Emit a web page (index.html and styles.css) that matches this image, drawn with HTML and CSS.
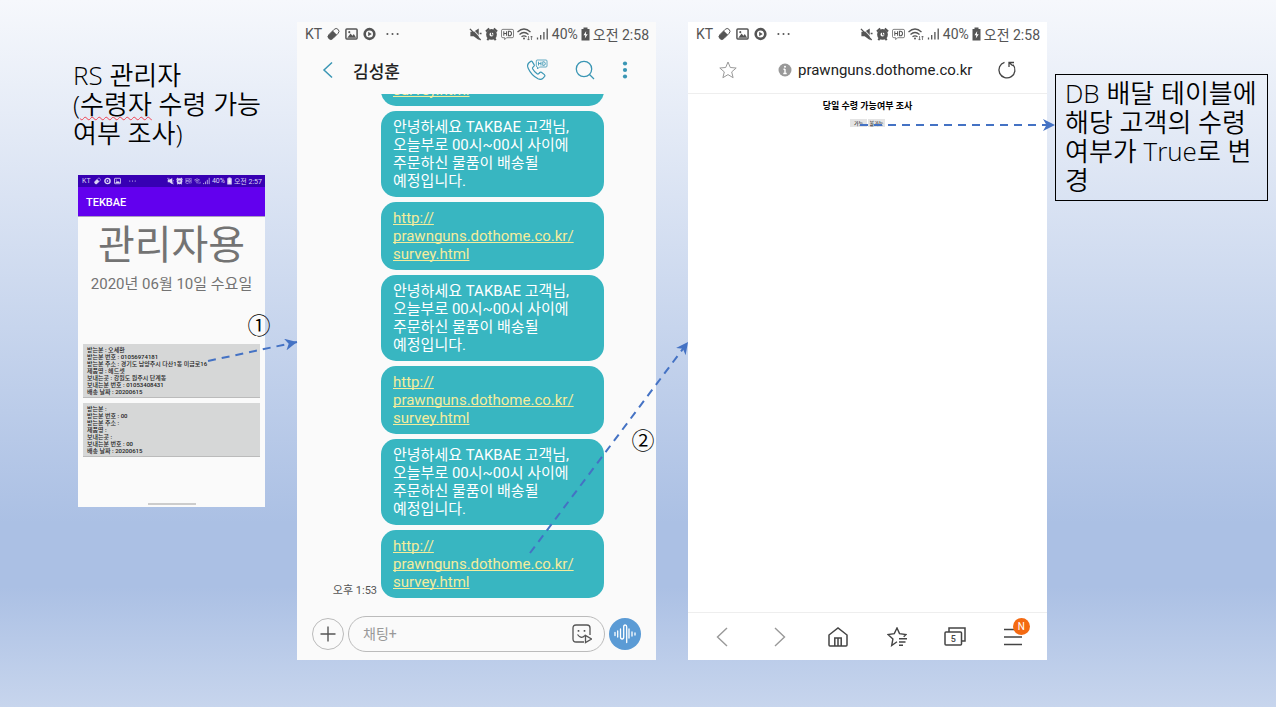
FILE: index.html
```
<!DOCTYPE html>
<html lang="ko">
<head>
<meta charset="utf-8">
<meta name="viewport" content="width=device-width, initial-scale=1">
<title>RS 관리자 수령 조사</title>
<link rel="stylesheet" href="styles.css">
</head>
<body>
<svg class="defs" aria-hidden="true">
  <symbol id="pill" viewBox="0 0 14 14"><g transform="rotate(-45 7 7)"><rect x="0" y="4" width="14" height="6" rx="3" fill="none" stroke="currentColor"/><path d="M3 4h6v6H3a3 3 0 0 1 0-6z" fill="currentColor"/></g></symbol>
  <symbol id="image" viewBox="0 0 14 14"><rect x="1" y="1.600" width="12" height="10.800" rx="1" fill="none" stroke="currentColor" stroke-width="1.600"/><path d="M2.500 11l3.500-4.500 2 2.300L9.500 7l2.500 4z" fill="currentColor"/><circle cx="4.600" cy="5" r="1.100" fill="currentColor"/></symbol>
  <symbol id="disc" viewBox="0 0 14 14"><circle cx="7" cy="7" r="5.200" fill="none" stroke="currentColor" stroke-width="2.800"/><path d="M5.600 4.600v4.800L9.400 7z" fill="currentColor"/></symbol>
  <symbol id="more" viewBox="0 0 14 14"><circle cx="1.500" cy="7" r="1.100" fill="currentColor"/><circle cx="7" cy="7" r="1.100" fill="currentColor"/><circle cx="12.500" cy="7" r="1.100" fill="currentColor"/></symbol>
  <symbol id="mute" viewBox="0 0 14 14"><path d="M1.500 4.500H5L10.500 1v12.500L5 9.500H1.500z" fill="currentColor"/><path d="M2.500.5l11 11.500" stroke="#fff" stroke-opacity=".8" stroke-width="1.200"/><path d="M1 1.500l11.500 12M11.500 6.500h2" stroke="currentColor" stroke-width="1.500"/></symbol>
  <symbol id="alarm" viewBox="0 0 14 14"><circle cx="7" cy="7.500" r="4" fill="none" stroke="currentColor" stroke-width="3.600"/><path d="M1 4.200L4.500 1M13 4.200L9.500 1M2.500 13.500l1.500-2M11.500 13.500l-1.500-2" stroke="currentColor" stroke-width="2.200"/><path d="M7 5v3h2.500" fill="none" stroke="currentColor"/></symbol>
  <symbol id="hd" viewBox="0 0 14 14"><path d="M2 2h10q1.500 0 1.500 1.500v6q0 1.500-1.500 1.500H6l-2 2v-2H2Q.5 11 .5 9.500v-6Q.5 2 2 2z" fill="none" stroke="currentColor" stroke-width=".8"/><path d="M3 4v5M6 4v5M3 6.500h3M8 4v5h1q2.300 0 2.300-2.500T9 4z" fill="none" stroke="currentColor" stroke-width="1.100"/></symbol>
  <symbol id="wifi" viewBox="0 0 16 14"><path d="M.5 5Q7 -1 13.500 5M2.500 7.500Q7 3.500 11.500 7.500M4.500 9.800Q7 8 9.500 9.800" fill="none" stroke="currentColor" stroke-width="1.300"/><circle cx="7" cy="11.500" r="1" fill="currentColor"/><path d="M11.500 9v4M10.300 11.800l1.200 1.300 1.200-1.300M14.500 13V9M13.300 10.300L14.500 9l1.200 1.300" fill="none" stroke="currentColor" stroke-width=".7"/></symbol>
  <symbol id="signal" viewBox="0 0 12 14"><path d="M1 12.500v-2M4.200 12.500V8M7.400 12.500V5M10.700 12.500V1.500" stroke="currentColor" stroke-width="1.300"/></symbol>
  <symbol id="battery" viewBox="0 0 9 14"><path d="M2.500.5h4v1.500h2V13.500H.5V2h2z" fill="currentColor"/><path d="M5.200 4L2.500 8.200h1.800L3.800 11.500l2.900-4.300H4.900z" fill="#fff"/></symbol>
</svg>

<main class="slide">
  <section class="admin">
    <h1 class="caption">RS 관리자<br>(<span class="misspelt">수령자</span> 수령 가능<br>여부 조사)</h1>
    <div class="phone phone-admin">
      <div class="status status-mini">
        <span>KT</span>
        <svg class="ic"><use href="#pill"/></svg><svg class="ic"><use href="#disc"/></svg><svg class="ic"><use href="#image"/></svg><svg class="ic more"><use href="#more"/></svg>
        <span class="status-right"><svg class="ic"><use href="#mute"/></svg><svg class="ic"><use href="#alarm"/></svg><svg class="ic"><use href="#hd"/></svg><svg class="ic wide"><use href="#wifi"/></svg><svg class="ic"><use href="#signal"/></svg><span>40%</span><svg class="ic thin"><use href="#battery"/></svg><span>오전 2:57</span></span>
      </div>
      <div class="appbar">TEKBAE</div>
      <div class="admin-title">관리자용</div>
      <div class="admin-date">2020년 06월 10일 수요일</div>
      <div class="cards">
        <button class="card" type="button">받는분 : 오세환<br>받는분 번호 : 01056974181<br>받는분 주소 : 경기도 남양주시 다산1동 미금로16<br>제품명 : 헤드셋<br>보내는곳 : 강원도 원주시 단계동<br>보내는분 번호 : 01053408431<br>배송 날짜 : 20200615</button>
        <button class="card" type="button">받는분 :<br>받는분 번호 : 00<br>받는분 주소 :<br>제품명 :<br>보내는곳 :<br>보내는분 번호 : 00<br>배송 날짜 : 20200615</button>
      </div>
      <div class="homebar"></div>
    </div>
  </section>

  <section class="phone phone-chat">
    <div class="status">
      <span>KT</span>
      <svg class="ic"><use href="#pill"/></svg><svg class="ic"><use href="#image"/></svg><svg class="ic"><use href="#disc"/></svg><svg class="ic more"><use href="#more"/></svg>
      <span class="status-right"><svg class="ic"><use href="#mute"/></svg><svg class="ic"><use href="#alarm"/></svg><svg class="ic"><use href="#hd"/></svg><svg class="ic wide"><use href="#wifi"/></svg><svg class="ic"><use href="#signal"/></svg><span>40%</span><svg class="ic thin"><use href="#battery"/></svg><span>오전 2:58</span></span>
    </div>
    <header class="chat-head">
      <button class="icon-btn" type="button" aria-label="뒤로"><svg width="12" height="18" viewBox="0 0 12 18"><path d="M10 1.500L2 9l8 7.500" fill="none" stroke="currentColor" stroke-width="1.500"/></svg></button>
      <h2 class="chat-name">김성훈</h2>
      <button class="icon-btn" type="button" aria-label="전화"><svg width="22" height="22" viewBox="0 0 22 22" fill="none" stroke="currentColor"><path d="M4.500 2.500L2.500 4.200Q.8 6.500 2.300 9.500q3.200 7 9.700 10.300 3 1.200 5-.6l1.700-1.900q.6-.9-.3-1.700l-3-2.300q-.9-.5-1.600.2l-1.200 1.300q-.7.500-1.500-.1-2.900-2.100-4.500-5-.4-.8.200-1.400l1.200-1.200q.6-.7.100-1.500L6.200 2.700q-.7-1-1.700-.2z" stroke-width="1.200"/><path d="M11 1h9q1 0 1 1v5q0 1-1 1h-6.500L11.500 10V8Q10.300 8 10.300 7V2q0-1 .7-1z" stroke-width=".8"/><path d="M12.500 2.700v3.800M15 2.700v3.800M12.500 4.600H15M16.800 2.700v3.800h.6q1.900 0 1.900-1.900t-1.900-1.900z" stroke-width=".9"/></svg></button>
      <button class="icon-btn" type="button" aria-label="검색"><svg width="20" height="20" viewBox="0 0 20 20" fill="none" stroke="currentColor" stroke-width="1.300"><circle cx="9" cy="9" r="7.700"/><path d="M14.500 14.500l4.500 4.500"/></svg></button>
      <button class="icon-btn" type="button" aria-label="더보기"><svg width="6" height="18" viewBox="0 0 6 18" fill="currentColor"><circle cx="3" cy="2.500" r="2.100"/><circle cx="3" cy="9" r="2.100"/><circle cx="3" cy="15.500" r="2.100"/></svg></button>
    </header>
    <div class="messages">
      <p class="bubble"><a class="link" href="#survey">http://<br>prawnguns.dothome.co.kr/<br>survey.html</a></p>
      <p class="bubble">안녕하세요 TAKBAE 고객님,<br>오늘부로 00시~00시 사이에<br>주문하신 물품이 배송될<br>예정입니다.</p>
      <p class="bubble"><a class="link" href="#survey">http://<br>prawnguns.dothome.co.kr/<br>survey.html</a></p>
      <p class="bubble">안녕하세요 TAKBAE 고객님,<br>오늘부로 00시~00시 사이에<br>주문하신 물품이 배송될<br>예정입니다.</p>
      <p class="bubble"><a class="link" href="#survey">http://<br>prawnguns.dothome.co.kr/<br>survey.html</a></p>
      <p class="bubble">안녕하세요 TAKBAE 고객님,<br>오늘부로 00시~00시 사이에<br>주문하신 물품이 배송될<br>예정입니다.</p>
      <div class="last-row"><time class="sent">오후 1:53</time><p class="bubble"><a class="link" href="#survey">http://<br>prawnguns.dothome.co.kr/<br>survey.html</a></p></div>
    </div>
    <form class="composer">
      <button class="round" type="button" aria-label="추가"><svg width="16" height="16" viewBox="0 0 16 16"><path d="M8 .5v15M.5 8h15" stroke="currentColor" stroke-width="1.400"/></svg></button>
      <div class="field">
        <input class="field-input" type="text" placeholder="채팅+" aria-label="메시지">
        <button class="icon-btn sticker" type="button" aria-label="스티커"><svg width="20" height="20" viewBox="0 0 20 20" fill="none" stroke="currentColor" stroke-width="1.300"><path d="M12 18H4q-3 0-3-3V4q0-3 3-3h11q3 0 3 3v7"/><path d="M13.500 11.500v7l6-3.500z" fill="#fafafa"/><path d="M5.500 10.500q3.500 5 7.500 1"/><path d="M6.500 6v1.800M12.500 6v1.800" stroke-width="1.600"/></svg></button>
      </div>
      <button class="round voice" type="button" aria-label="음성"><svg width="22" height="20" viewBox="0 0 22 20" fill="none" stroke="currentColor" stroke-width="1.300" stroke-linecap="round"><path d="M1 8.500v3M3.700 7v6M6.500 5v8q0 2 1.600 2t1.600-2V3q0-2 1.500-2t1.500 2v15.500M15 5v9M18 8v4M21 9v2"/></svg></button>
    </form>
  </section>

  <section class="phone phone-web">
    <div class="status">
      <span>KT</span>
      <svg class="ic"><use href="#pill"/></svg><svg class="ic"><use href="#image"/></svg><svg class="ic"><use href="#disc"/></svg><svg class="ic more"><use href="#more"/></svg>
      <span class="status-right"><svg class="ic"><use href="#mute"/></svg><svg class="ic"><use href="#alarm"/></svg><svg class="ic"><use href="#hd"/></svg><svg class="ic wide"><use href="#wifi"/></svg><svg class="ic"><use href="#signal"/></svg><span>40%</span><svg class="ic thin"><use href="#battery"/></svg><span>오전 2:58</span></span>
    </div>
    <header class="web-head">
      <button class="icon-btn grey" type="button" aria-label="즐겨찾기"><svg width="18" height="18" viewBox="0 0 18 18"><path d="M9 1l2.300 5.500 5.900.5-4.500 3.900 1.400 5.800L9 13.600l-5.100 3.100 1.400-5.800L.8 7l5.900-.5z" fill="none" stroke="currentColor"/></svg></button>
      <div class="address">
        <svg width="14" height="14" viewBox="0 0 14 14"><circle cx="7" cy="7" r="6.500" fill="#999"/><path d="M7 6v4.500M5.500 6.300H7M5.300 10.500h3.400" stroke="#fff" stroke-width="1.400"/><circle cx="7" cy="3.700" r="1" fill="#fff"/></svg>
        <input class="url" type="text" value="prawnguns.dothome.co.kr" aria-label="주소">
      </div>
      <button class="icon-btn dark" type="button" aria-label="새로고침"><svg width="20" height="20" viewBox="0 0 20 20" fill="none" stroke="currentColor" stroke-width="1.300"><path d="M7.500 2.300A8 8 0 1 0 16 4.700"/><path d="M12 7V2.500h5M12.300 2.800l3.500 3"/></svg></button>
    </header>
    <div class="web-page">
      <h2 class="survey-title">당일 수령 가능여부 조사</h2>
      <div class="survey-actions"><button class="tiny" type="button">가능</button><button class="tiny" type="button">불가능</button></div>
    </div>
    <nav class="web-nav">
      <button class="icon-btn pale" type="button" aria-label="이전"><svg width="12" height="20" viewBox="0 0 12 20"><path d="M11 1L1.500 10 11 19" fill="none" stroke="currentColor" stroke-width="1.400"/></svg></button>
      <button class="icon-btn pale" type="button" aria-label="다음"><svg width="12" height="20" viewBox="0 0 12 20"><path d="M1 1l9.500 9L1 19" fill="none" stroke="currentColor" stroke-width="1.400"/></svg></button>
      <button class="icon-btn dark" type="button" aria-label="홈"><svg width="20" height="20" viewBox="0 0 20 20" fill="none" stroke="currentColor" stroke-width="1.500"><path d="M1 8L10 1l9 7v10q0 1-1 1H2q-1 0-1-1z"/><path d="M6.800 19v-8h6.400v8M10 11v8"/></svg></button>
      <button class="icon-btn dark" type="button" aria-label="북마크"><svg width="20" height="20" viewBox="0 0 20 20" fill="none" stroke="currentColor" stroke-width="1.400"><path d="M10 14.800L4.700 18.500l1.200-6.600L1 7.500l6.300-.9L10 1l2.500 5.600 6.500.9-2.300 2.300M12 11.800h8M12 15h6.500M12 18.200h4"/></svg></button>
      <button class="icon-btn dark" type="button" aria-label="탭 5개"><svg width="22" height="20" viewBox="0 0 22 20" fill="none" stroke="currentColor" stroke-width="1.500"><path d="M5 5V1h16v13h-3.500"/><rect x="1" y="5" width="16.500" height="13" rx="1"/><text class="tab-count" x="9.300" y="15" text-anchor="middle">5</text></svg></button>
      <button class="icon-btn dark menu" type="button" aria-label="메뉴"><svg width="18" height="18" viewBox="0 0 18 18"><path d="M0 1.500h18M0 9h18M0 16.500h18" stroke="currentColor" stroke-width="1.600"/></svg><span class="badge">N</span></button>
    </nav>
  </section>

  <aside class="note">DB 배달 테이블에<br>해당 고객의 수령<br>여부가 True로 변<br>경</aside>

  <svg class="arrows" viewBox="0 0 1276 707" preserveAspectRatio="none" aria-hidden="true">
    <defs><marker id="head" viewBox="0 0 12 12" refX="12" refY="6" markerWidth="12" markerHeight="12" markerUnits="userSpaceOnUse" orient="auto"><path d="M0 0l12 6-12 6 3.500-6z" fill="#4472c4"/></marker></defs>
    <path class="arrow" d="M208 361L297 342"/>
    <path class="arrow" d="M530 553L688 342"/>
    <path class="arrow" d="M860 125H1055"/>
  </svg>
  <span class="step step-one">①</span>
  <span class="step step-two">②</span>
</main>
</body>
</html>
```
FILE: styles.css
```
* { box-sizing: border-box; }

body {
  margin: 0;
  font-family: Roboto, "Noto Sans CJK KR", sans-serif;
  color: #000;
}

button, input { font: inherit; color: inherit; }
h1, h2, p { margin: 0; font-weight: inherit; }
.defs { position: absolute; width: 0; height: 0; }

.slide {
  position: relative;
  display: grid;
  grid-template-columns:
    minmax(0, 73fr) minmax(0, 204fr) minmax(0, 20fr) minmax(0, 359fr)
    minmax(0, 32fr) minmax(0, 359fr) minmax(0, 8fr) minmax(0, 213fr) minmax(0, 8fr);
  align-items: start;
  min-height: 100vh;
  padding: 22px 0 47px;
  background: linear-gradient(#f6f8fc, #abc0e4 74%, #abc0e4 83%, #c7d5ed);
}

.admin { grid-column: 2; padding-top: 39px; }
.phone-chat { grid-column: 4; }
.phone-web { grid-column: 6; }

.caption, .note {
  font-family: "Open Sans", "Noto Sans CJK KR", sans-serif;
  font-size: 26px;
  font-weight: 350;
  line-height: 29px;
  white-space: nowrap;
}
.misspelt {
  text-decoration: underline wavy #f04050 1px;
  text-decoration-skip-ink: none;
  text-underline-offset: 2px;
}
.note {
  grid-column: 8;
  margin-top: 52px;
  padding: 4px 9px 5px;
  border: 1px solid #000;
}

.phone {
  display: flex;
  flex-direction: column;
  background: #fafafa;
}
.phone-chat, .phone-web { min-height: 638px; }
.phone-web { background: #fff; }
.phone-admin {
  min-height: 332px;
  margin: 27px 12px 0 5px;
}

.status {
  display: flex;
  align-items: center;
  gap: 5px;
  height: 24px;
  padding: 0 7px 0 8px;
  font-size: 14px;
  white-space: nowrap;
  color: #555;
}
.ic { width: 13px; height: 14px; flex: none; }
.ic.wide { width: 16px; }
.ic.thin { width: 9px; }
.ic.more { margin-left: 5px; }
.status-right {
  display: flex;
  align-items: center;
  gap: 3px;
  margin-left: auto;
}
.status-mini {
  height: 12px;
  gap: 3px;
  padding: 0 3px 0 4px;
  font-size: 7px;
  color: #ddd5f5;
  background: #3700b3;
}
.status-mini .ic { width: 7px; height: 8px; }
.status-mini .ic.thin { width: 5px; }
.status-mini .status-right { gap: 2px; }

.appbar {
  height: 30px;
  padding: 1px 8px 0;
  font-size: 11px;
  font-weight: 500;
  line-height: 29px;
  color: #fff;
  background: #6200ee;
  border-bottom: 1px solid #aaa0c0;
}
.admin-title {
  padding-top: 5px;
  font-size: 40px;
  line-height: 48px;
  text-align: center;
  color: #737373;
}
.admin-date {
  font-size: 15px;
  line-height: 28px;
  text-align: center;
  white-space: nowrap;
  color: #737373;
}
.cards {
  display: grid;
  gap: 5px;
  margin-top: 46px;
  padding: 0 5px;
}
.card {
  padding: 2px 4px;
  border: 0;
  border-bottom: 1px solid #bbb;
  font-size: 6px;
  font-weight: 500;
  line-height: 7px;
  text-align: left;
  color: #222;
  background: #d6d7d7;
}
.homebar {
  width: 48px;
  height: 2px;
  margin: auto auto 2px;
  background: #ccc;
}

.icon-btn {
  display: inline-flex;
  align-items: center;
  justify-content: center;
  padding: 0;
  border: 0;
  background: none;
  color: #3a96b4;
}
.chat-head {
  display: flex;
  align-items: center;
  gap: 27px;
  height: 48px;
  padding: 0 28px 0 25px;
}
.chat-name {
  margin: 0 auto 0 -8px;
  font-size: 17px;
  font-weight: 500;
  color: #222;
}
.messages {
  display: flex;
  flex-direction: column;
  align-items: flex-end;
  justify-content: flex-end;
  gap: 5px;
  height: 504px;
  padding: 0 52px 0 0;
  overflow: hidden;
}
.bubble {
  flex: none;
  width: 223px;
  padding: 7px 12px;
  border-radius: 15px;
  font-size: 15px;
  line-height: 18px;
  white-space: nowrap;
  color: #fff;
  background: #38b6c1;
}
.link {
  color: #f4ec9c;
  text-decoration-thickness: 1px;
  text-decoration-skip-ink: none;
}
.last-row { display: flex; align-items: flex-end; gap: 4px; }
.sent { font-size: 11px; line-height: 14px; color: #555; white-space: nowrap; }

.composer {
  display: flex;
  align-items: center;
  gap: 4px;
  margin-top: auto;
  padding: 0 15px 8px;
}
.round {
  display: flex;
  align-items: center;
  justify-content: center;
  flex: none;
  width: 32px;
  height: 32px;
  padding: 0;
  border: 1px solid #bbb;
  border-radius: 50%;
  color: #555;
  background: none;
}
.voice { border: 0; color: #fff; background: #5b9bd5; }
.field {
  display: flex;
  align-items: center;
  flex: 1;
  min-width: 0;
  height: 36px;
  padding: 0 12px 0 14px;
  border: 1px solid #bbb;
  border-radius: 18px;
}
.field-input {
  flex: 1;
  min-width: 0;
  padding: 0;
  border: 0;
  font-size: 14px;
  background: none;
}
.field-input::placeholder { color: #999; opacity: 1; }
.sticker { color: #555; }

.grey { color: #999; }
.dark { color: #444; }
.pale { color: #999; }
.web-head {
  display: flex;
  align-items: center;
  justify-content: space-between;
  height: 48px;
  padding: 0 30px 0 31px;
  border-bottom: 1px solid #eee;
}
.address { display: flex; align-items: center; gap: 6px; margin-left: 20px; }
.url {
  width: 178px;
  padding: 0;
  border: 0;
  font-size: 15px;
  color: #222;
  background: none;
}
.web-page { flex: 1; padding-top: 6px; text-align: center; }
.survey-title { font-size: 9px; font-weight: 700; line-height: 13px; }
.survey-actions { display: flex; justify-content: center; gap: 1px; margin-top: 6px; }
.tiny {
  width: 17px;
  height: 8px;
  padding: 0;
  border: 0;
  font-size: 5px;
  line-height: 8px;
  background: #e4e4e4;
}
.web-nav {
  display: grid;
  grid-template-columns: repeat(6, 1fr);
  height: 48px;
  padding: 0 5px;
  border-top: 1px solid #eee;
}
.tab-count { font-size: 9px; font-weight: 500; fill: #444; stroke: none; }
.menu { position: relative; }
.badge {
  position: absolute;
  top: 5px;
  left: 50%;
  width: 17px;
  height: 17px;
  border-radius: 50%;
  font-size: 10px;
  line-height: 17px;
  color: #fff;
  background: #f46a12;
}

.arrows {
  position: absolute;
  top: 0;
  left: 0;
  width: 100%;
  height: 707px;
  pointer-events: none;
}
.arrow {
  fill: none;
  stroke: #4472c4;
  stroke-width: 2;
  stroke-dasharray: 8 6;
  marker-end: url(#head);
}
.step {
  position: absolute;
  font-family: "Noto Sans CJK KR", sans-serif;
  font-size: 23px;
  font-weight: 350;
  line-height: 24px;
  transform: translate(-50%, -50%);
}
.step-one { top: 324px; left: 20.300%; }
.step-two { top: 439px; left: 50.400%; }
```
